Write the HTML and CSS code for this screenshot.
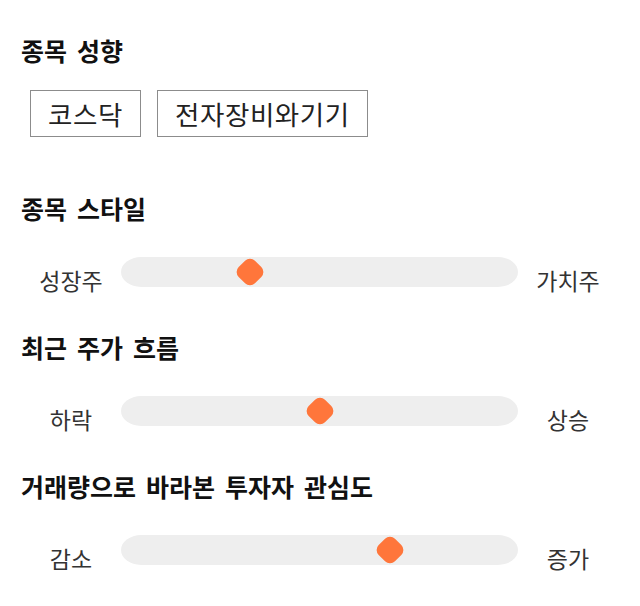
FILE: index.html
```html
<!DOCTYPE html>
<html lang="ko">
<head>
<meta charset="utf-8">
<link rel="stylesheet" href="styles.css">
</head>
<body>
<main class="page">
  <section class="block">
    <h2 class="title">종목 성향</h2>
    <div class="tags">
      <span class="tag">코스닥</span>
      <span class="tag">전자장비와기기</span>
    </div>
  </section>
  <section class="block">
    <h2 class="title">종목 스타일</h2>
    <div class="scale">
      <span class="label">성장주</span>
      <div class="track"><span class="thumb" style="left: 32.5%"></span></div>
      <span class="label">가치주</span>
    </div>
  </section>
  <section class="block">
    <h2 class="title">최근 주가 흐름</h2>
    <div class="scale">
      <span class="label">하락</span>
      <div class="track"><span class="thumb" style="left: 50%"></span></div>
      <span class="label">상승</span>
    </div>
  </section>
  <section class="block">
    <h2 class="title">거래량으로 바라본 투자자 관심도</h2>
    <div class="scale">
      <span class="label">감소</span>
      <div class="track"><span class="thumb" style="left: 67.7%"></span></div>
      <span class="label">증가</span>
    </div>
  </section>
</main>
</body>
</html>
```

FILE: styles.css
```css
html, body {
  margin: 0;
  padding: 0;
  background: #ffffff;
}

body {
  font-family: "Noto Sans CJK KR", "Noto Sans", sans-serif;
  color: #222222;
}

.page {
  padding: 34px 18px 0 21px;
  display: flex;
  flex-direction: column;
}

.block {
  display: flex;
  flex-direction: column;
}

.block + .block {
  margin-top: 36px;
}

.block:nth-child(2) {
  margin-top: 55px;
}

.title {
  margin: 0;
  font-size: 25px;
  line-height: 32px;
  font-weight: 700;
  color: #111111;
  word-spacing: 3px;
}

.tags {
  display: flex;
  gap: 16px;
  margin-top: 24px;
  padding-left: 9px;
}

.tag {
  box-sizing: border-box;
  height: 47px;
  padding: 0 17px;
  border: 1px solid #8c8c8c;
  font-size: 26.5px;
  letter-spacing: 0.6px;
  line-height: 45px;
  color: #222222;
}

.scale {
  display: flex;
  align-items: flex-start;
  margin-top: 33px;
}

.label {
  width: 100px;
  text-align: center;
  font-size: 23px;
  line-height: 30px;
  color: #333333;
  padding-top: 8px;
}

.track {
  position: relative;
  flex: 0 0 397px;
  height: 30px;
  background: #eeeeee;
  border-radius: 20px / 15px;
}

.thumb {
  position: absolute;
  top: 50%;
  width: 23px;
  height: 23px;
  background: #ff763b;
  border-radius: 7px;
  transform: translate(-50%, -50%) rotate(45deg);
}
```
